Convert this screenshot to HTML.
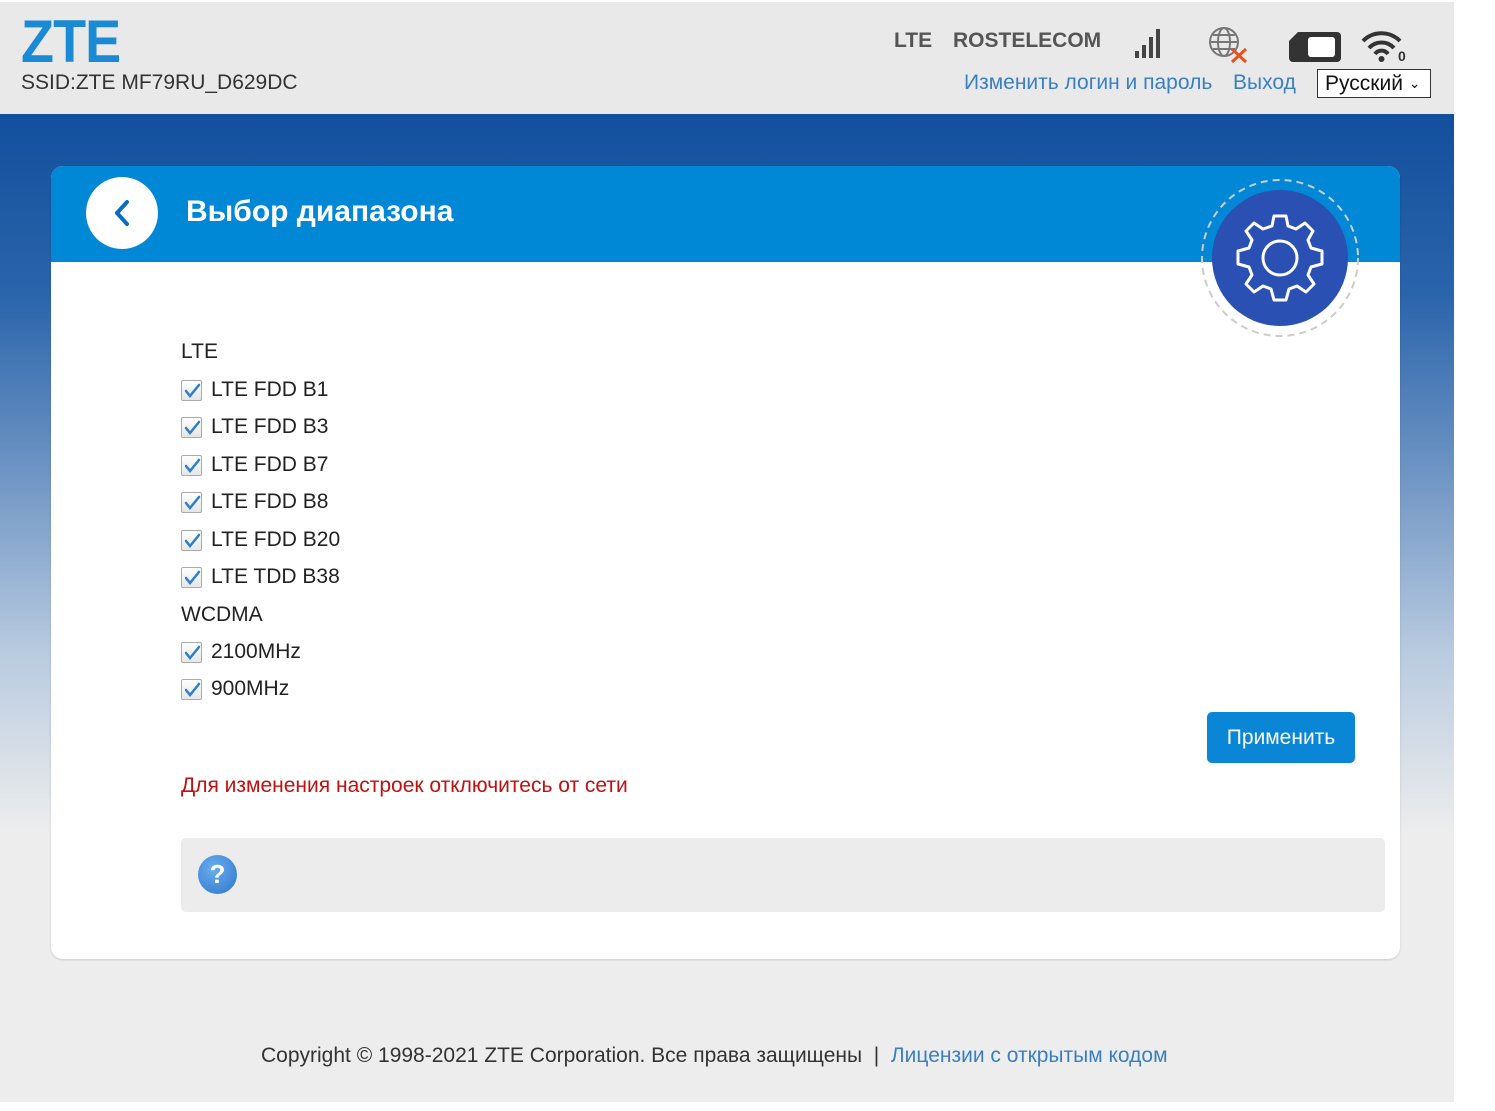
<!DOCTYPE html>
<html><head><meta charset="utf-8"><style>
body{margin:0;width:1495px;height:1111px;background:#fff;font-family:"Liberation Sans",sans-serif;position:relative;overflow:hidden}
#page{position:absolute;left:0;top:2px;width:1454px;height:1100px;background:#ededed}
#hdr{position:absolute;left:0;top:0;width:1454px;height:112px;background:#e9e9e9}
#grad{position:absolute;left:0;top:112px;width:1454px;height:720px;background:linear-gradient(to bottom,#124f9d 0%,#2a64ab 25%,#6f95c4 50%,#b9cbe0 75%,#ededed 100%)}
.abs{position:absolute}
#card{position:absolute;left:51px;top:166px;width:1349px;height:793px;background:#fff;border-radius:12px;overflow:hidden;box-shadow:0 1px 2px rgba(0,0,0,.15)}
#band{position:absolute;left:0;top:0;width:1349px;height:96px;background:#0088d6}
.cb{position:absolute;left:181px;width:19px;height:19px;border:1px solid #aaa;border-radius:2px;background:linear-gradient(#fff,#e6e6e6)}
.lbl{position:absolute;left:211px;font-size:21px;color:#222;line-height:24px}
</style></head><body>
<div id="page">
<div id="hdr">
 <div class="abs" style="left:21px;top:10px;font-size:60px;font-weight:bold;color:#1a8ad4;letter-spacing:-1px;line-height:60px;transform:scaleX(0.9);transform-origin:left">ZTE</div>
 <div class="abs" style="left:21px;top:69px;font-size:21px;color:#333">SSID:ZTE MF79RU_D629DC</div>
 <div class="abs" style="left:894px;top:27px;font-size:21px;font-weight:bold;color:#555">LTE</div>
 <div class="abs" style="left:953px;top:27px;font-size:21px;font-weight:bold;color:#555">ROSTELECOM</div>
 <svg class="abs" style="left:1133px;top:26px" width="32" height="34"><rect x="2" y="23" width="4" height="7" fill="#444"/><rect x="9" y="17" width="4" height="13" fill="#444"/><rect x="16" y="9" width="4" height="21" fill="#444"/><rect x="23" y="1" width="4" height="29" fill="#444"/></svg>
 <svg class="abs" style="left:1208px;top:24px" width="46" height="40"><circle cx="16" cy="16" r="14" fill="none" stroke="#777" stroke-width="2"/><ellipse cx="16" cy="16" rx="6" ry="14" fill="none" stroke="#777" stroke-width="2"/><path d="M2 16H30M5 9H27M5 23H27" stroke="#777" stroke-width="2"/><path d="M24 23L38 36M38 23L24 36" stroke="#e8501f" stroke-width="3"/></svg>
 <svg class="abs" style="left:1288px;top:28px" width="54" height="34"><path d="M10 2H49a4 4 0 0 1 4 4V28a4 4 0 0 1-4 4H5a4 4 0 0 1-4-4V11Z" fill="#333"/><rect x="20" y="7" width="27" height="20" rx="3" fill="#fff"/></svg>
 <svg class="abs" style="left:1360px;top:28px" width="50" height="32"><path d="M3 11A26 26 0 0 1 40 11" fill="none" stroke="#333" stroke-width="4"/><path d="M9 18A17 17 0 0 1 34 18" fill="none" stroke="#333" stroke-width="4"/><path d="M15 24A8 8 0 0 1 28 24" fill="none" stroke="#333" stroke-width="4"/><circle cx="21.5" cy="29" r="3" fill="#333"/><text x="38" y="31" font-size="14" font-weight="bold" fill="#333" font-family="Liberation Sans">0</text></svg>
 <div class="abs" style="left:964px;top:69px;font-size:21px;color:#3a7fc4">Изменить логин и пароль</div>
 <div class="abs" style="left:1233px;top:69px;font-size:21px;color:#3a7fc4">Выход</div>
 <div class="abs" style="left:1317px;top:67px;height:27px;border:1px solid #333;background:#fff;font-size:21px;color:#111;line-height:27px;padding-left:7px;width:105px">Русский <span style="font-size:14px;position:relative;top:-2px">&#8964;</span></div>
</div>
<div id="grad"></div>
</div>
<div id="card" style="top:166px">
 <div id="band"></div>
 <div class="abs" style="left:35px;top:11px;width:72px;height:72px;border-radius:50%;background:#fff"></div>
 <svg class="abs" style="left:58px;top:32px" width="26" height="30"><path d="M18 4L8 15L18 26" fill="none" stroke="#0a6cc0" stroke-width="4" stroke-linecap="round" stroke-linejoin="round"/></svg>
 <div class="abs" style="left:135px;top:29px;font-size:30px;font-weight:bold;color:#fff">Выбор диапазона</div>
</div>
<svg class="abs" style="left:1198px;top:176px" width="164" height="164">
 <circle cx="82" cy="82" r="78" fill="none" stroke="#ccc" stroke-width="2" stroke-dasharray="7 5"/>
 <circle cx="82" cy="82" r="68" fill="#2a50b3"/>
 <g transform="translate(82,82)" fill="none" stroke="#fff" stroke-width="3" stroke-linejoin="round">
  <path d="M-6,-42 L6,-42 L8,-32 L16,-29 L25,-35 L33,-27 L28,-18 L31,-10 L42,-7 L42,6 L31,9 L28,17 L34,26 L26,34 L17,28 L9,31 L6,42 L-6,42 L-9,31 L-17,28 L-26,34 L-34,26 L-28,17 L-31,9 L-42,6 L-42,-7 L-31,-10 L-28,-18 L-34,-27 L-26,-35 L-17,-29 L-8,-32 Z"/>
  <circle r="17"/>
 </g>
</svg>
<div class="abs" style="left:181px;top:340px;font-size:21px;color:#222">LTE</div>
<div class="cb" style="top:380px"></div><div class="lbl" style="top:378px">LTE FDD B1</div>
<div class="cb" style="top:417px"></div><div class="lbl" style="top:415px">LTE FDD B3</div>
<div class="cb" style="top:455px"></div><div class="lbl" style="top:453px">LTE FDD B7</div>
<div class="cb" style="top:492px"></div><div class="lbl" style="top:490px">LTE FDD B8</div>
<div class="cb" style="top:530px"></div><div class="lbl" style="top:528px">LTE FDD B20</div>
<div class="cb" style="top:567px"></div><div class="lbl" style="top:565px">LTE TDD B38</div>
<div class="abs" style="left:181px;top:603px;font-size:21px;color:#222">WCDMA</div>
<div class="cb" style="top:642px"></div><div class="lbl" style="top:640px">2100MHz</div>
<div class="cb" style="top:679px"></div><div class="lbl" style="top:677px">900MHz</div>
<svg class="abs" style="left:182px;top:380px;pointer-events:none" width="22" height="320">
 <g fill="none" stroke="#2b7fd0" stroke-width="2.5" stroke-linecap="round">
  <path d="M4 11L8 16L17 5"/><path d="M4 48L8 53L17 42"/><path d="M4 86L8 91L17 80"/><path d="M4 123L8 128L17 117"/><path d="M4 161L8 166L17 155"/><path d="M4 198L8 203L17 192"/><path d="M4 273L8 278L17 267"/><path d="M4 310L8 315L17 304"/>
 </g>
</svg>
<div class="abs" style="left:1207px;top:712px;width:148px;height:51px;background:#0a86d6;border-radius:5px;color:#fff;font-size:21px;line-height:51px;text-align:center">Применить</div>
<div class="abs" style="left:181px;top:774px;font-size:21px;color:#c01010">Для изменения настроек отключитесь от сети</div>
<div class="abs" style="left:181px;top:838px;width:1204px;height:74px;background:#ececec;border-radius:5px"></div>
<div class="abs" style="left:198px;top:855px;width:39px;height:39px;border-radius:50%;background:radial-gradient(circle at 40% 35%,#6aaeee,#2c74cc);color:#fff;font-weight:bold;font-size:26px;line-height:39px;text-align:center">?</div>
<div class="abs" style="left:261px;top:1044px;font-size:21px;color:#333">Copyright © 1998-2021 ZTE Corporation. Все права защищены &nbsp;| &nbsp;<span style="color:#3a7fc4">Лицензии с открытым кодом</span></div>
</body></html>
